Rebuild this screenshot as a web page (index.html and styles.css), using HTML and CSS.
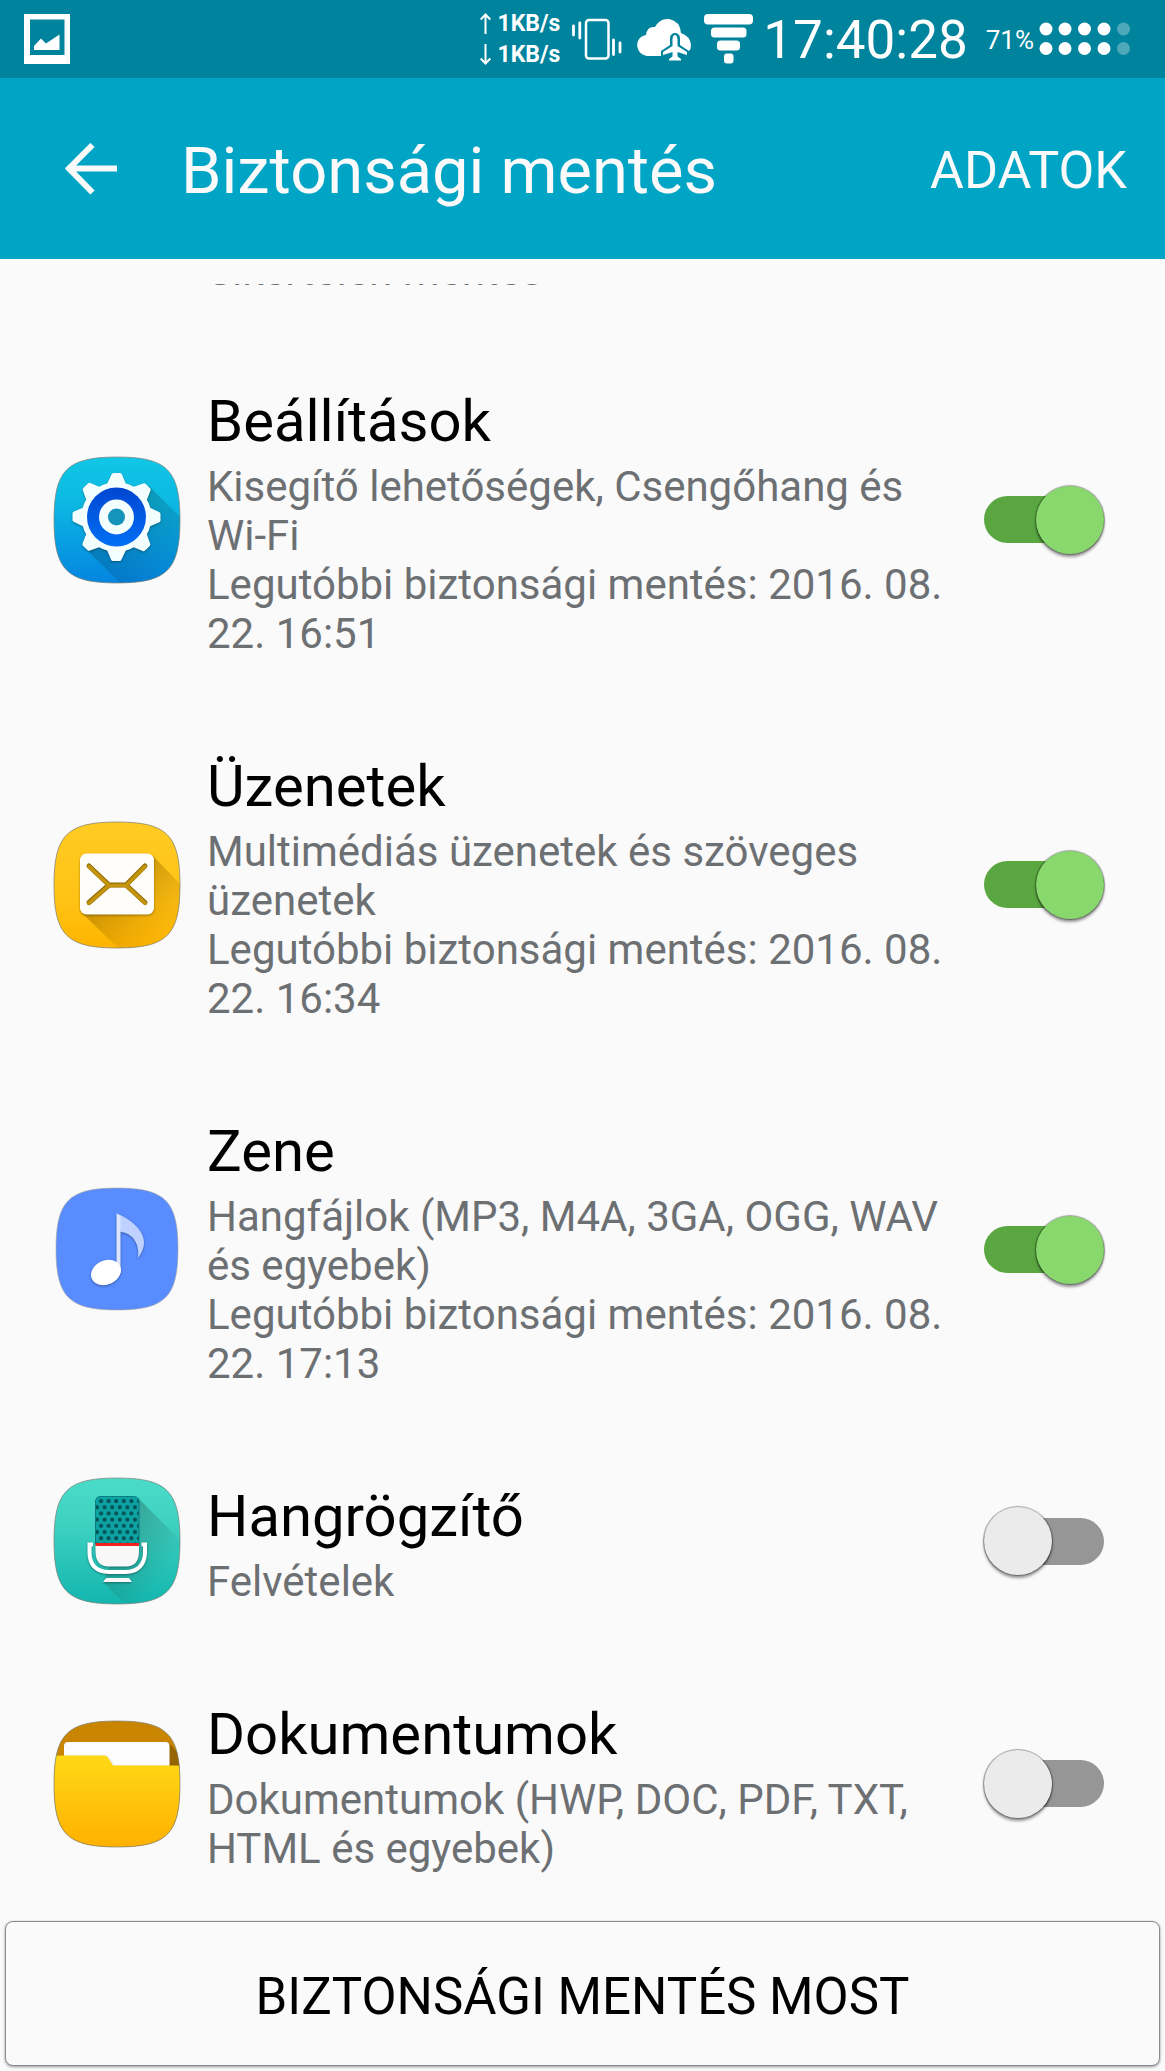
FILE: index.html
```html
<!DOCTYPE html>
<html lang="hu">
<head>
    <meta charset="UTF-8">
    <meta name="viewport" content="width=device-width, initial-scale=1.0">
    <title>Biztonsági mentés</title>
    <link rel="stylesheet" href="styles.css">
</head>
<body>
    <div class="status-bar">
        <svg class="photo-icon" width="46" height="50" viewBox="0 0 46 50">
            <path fill="#fff" fill-rule="evenodd" d="M0 0H46V50H0ZM6 5.500V41H40.500V5.500Z"/>
            <path fill="#fff" d="M10 32L17 24.500L22 29.500L35.500 20.500V36H10Z"/>
        </svg>
        <div class="speed">
            <p>
                <svg width="11" height="21" viewBox="0 0 11 21"><path d="M5.500 21V1.500M.7 6.500L5.500 1.500L10.300 6.500" fill="none" stroke="#fff" stroke-width="2"/></svg>
                <span>1KB/s</span>
            </p>
            <p>
                <svg width="11" height="21" viewBox="0 0 11 21"><path d="M5.500 0V19.500M.7 14.500L5.500 19.500L10.300 14.500" fill="none" stroke="#fff" stroke-width="2"/></svg>
                <span>1KB/s</span>
            </p>
        </div>
        <svg class="vibrate-icon" width="50" height="42" viewBox="0 0 50 42" fill="none" stroke="#fff">
            <rect x="14" y="2" width="22.500" height="38.500" rx="3" stroke-width="2.500"/>
            <path d="M1.500 8V17M7.800 5V20M41.500 22V36.500M48 25V34" stroke-width="2.800" stroke-linecap="round"/>
        </svg>
        <svg class="cloud-icon" width="56" height="43" viewBox="0 0 56 43">
            <path fill="#fff" d="M11 38A11 11 0 0 1 2 23Q4 18 10 17Q11 8 19 9Q24 0 33 1Q44 3 45 15Q54 18 55 27Q55 31 53 33L44 27V20A5 5 0 0 0 34 20V27L25 33V38Z"/>
            <path fill="#fff" d="M39 17C37 17 36.500 20 36.500 22V28L27 34V37L36.500 34V38.500L33 41V42.500H45V41L41.500 38.500V34L51 37V34L41.500 28V22C41.500 20 41 17 39 17Z"/>
        </svg>
        <svg class="signal-icon" width="49" height="50" viewBox="0 0 49 50" fill="#fff">
            <rect width="49" height="10.500" rx="4"/>
            <rect x="7" y="13.500" width="35.500" height="10" rx="3.500"/>
            <rect x="13" y="26.500" width="23" height="10" rx="3.500"/>
            <rect x="20" y="39.500" width="9.500" height="10" rx="3"/>
        </svg>
        <span class="clock">17:40:28</span>
        <span class="percent">71%</span>
        <svg width="92" height="34" viewBox="0 0 92 34" fill="#fff">
            <circle cx="7" cy="7" r="6.500"/><circle cx="26" cy="7" r="6.500"/><circle cx="45.500" cy="7" r="6.500"/><circle cx="65" cy="7" r="6.500"/>
            <circle cx="7" cy="26.500" r="6.500"/><circle cx="26" cy="26.500" r="6.500"/><circle cx="45.500" cy="26.500" r="6.500"/><circle cx="65" cy="26.500" r="6.500"/>
            <g opacity=".3"><circle cx="84.500" cy="7" r="6.500"/><circle cx="84.500" cy="26.500" r="6.500"/></g>
        </svg>
    </div>

    <header class="app-bar">
        <button class="back" type="button" aria-label="Vissza">
            <svg width="52" height="52" viewBox="0 0 52 52"><path d="M52 25.500H5M27.500 2L4 25.500L27.500 49.500" fill="none" stroke="#fafafa" stroke-width="6"/></svg>
        </button>
        <h1>Biztonsági mentés</h1>
        <button class="data" type="button">ADATOK</button>
    </header>

    <main>
        <!-- tail of the row that is scrolled out -->
        <div class="scrolled">
            <p>Sikertelen mentés</p>
        </div>

        <div class="row">
            <svg class="icon" width="128" height="128" viewBox="0 0 128 128">
                <defs>
                    <linearGradient id="blue" x2="0" y2="1"><stop stop-color="#11c7e6"/><stop offset=".35" stop-color="#0cb9e2"/><stop offset="1" stop-color="#0484e0"/></linearGradient>
                    <linearGradient id="ring" x2="0" y2="1"><stop stop-color="#0046d2"/><stop offset="1" stop-color="#0070f4"/></linearGradient>
                    <linearGradient id="shade" x2="1" y2="1"><stop offset=".3" stop-opacity=".2"/><stop offset="1" stop-opacity="0"/></linearGradient>
                    <clipPath id="tile"><path d="M64 1C114 1 127 14 127 64S114 127 64 127 1 114 1 64 14 1 64 1Z"/></clipPath>
                    <path id="tooth" d="M54 28L58.500 18.500Q59 17 60.500 17H67Q68.500 17 69 18.500L73 28Z"/>
                </defs>
                <g clip-path="url(#tile)">
                    <rect width="128" height="128" fill="url(#blue)"/>
                    <path d="M96 30L128 62V128H68L32 92Z" fill="url(#shade)"/>
                </g>
                <g class="raised" fill="#f3feff">
                    <circle cx="63.500" cy="61" r="35"/>
                    <use href="#tooth"/>
                    <use href="#tooth" transform="rotate(45 63.500 61)"/>
                    <use href="#tooth" transform="rotate(90 63.500 61)"/>
                    <use href="#tooth" transform="rotate(135 63.500 61)"/>
                    <use href="#tooth" transform="rotate(180 63.500 61)"/>
                    <use href="#tooth" transform="rotate(225 63.500 61)"/>
                    <use href="#tooth" transform="rotate(270 63.500 61)"/>
                    <use href="#tooth" transform="rotate(315 63.500 61)"/>
                </g>
                <circle cx="63.500" cy="61" r="29.500" fill="url(#ring)"/>
                <circle cx="63.500" cy="61" r="13" fill="#1593bb" stroke="#f3feff" stroke-width="9"/>
                <path class="edge" d="M64 1C114 1 127 14 127 64S114 127 64 127 1 114 1 64 14 1 64 1Z"/>
            </svg>
            <div class="text">
                <label for="settings">Beállítások</label>
                <p>Kisegítő lehetőségek, Csengőhang és Wi-Fi</p>
                <p>Legutóbbi biztonsági mentés: 2016. 08. 22. 16:51</p>
            </div>
            <input class="switch" type="checkbox" id="settings" checked>
        </div>

        <div class="row">
            <svg class="icon" width="128" height="128" viewBox="0 0 128 128">
                <defs>
                    <linearGradient id="amber" x2="0" y2="1"><stop stop-color="#ffcb24"/><stop offset=".6" stop-color="#ffc315"/><stop offset="1" stop-color="#ffb400"/></linearGradient>
                    <linearGradient id="amber-shade" x2="1" y2="1"><stop offset=".3" stop-color="#b07d00" stop-opacity=".75"/><stop offset=".9" stop-color="#d89500" stop-opacity="0"/></linearGradient>
                </defs>
                <g clip-path="url(#tile)">
                    <rect width="128" height="128" fill="url(#amber)"/>
                    <path d="M99 34L128 64V128H66L29 92Z" fill="url(#amber-shade)"/>
                </g>
                <rect class="raised" x="27" y="32.500" width="74" height="61" rx="6.500" fill="#fffefa"/>
                <path d="M36 45L56 64L36 81.500M92 45L73 64L92 81.500M56 64H73" fill="none" stroke="#8f6c08" stroke-width="5" stroke-linecap="round" stroke-linejoin="round"/>
                <path d="M36 45.500L56 64.500L36 82M92 45.500L73 64.500L92 82M56 64.500H73" fill="none" stroke="#c4950c" stroke-width="3.500" stroke-linecap="round" stroke-linejoin="round"/>
                <path class="edge" d="M64 1C114 1 127 14 127 64S114 127 64 127 1 114 1 64 14 1 64 1Z"/>
            </svg>
            <div class="text">
                <label for="messages">Üzenetek</label>
                <p>Multimédiás üzenetek és szöveges üzenetek</p>
                <p>Legutóbbi biztonsági mentés: 2016. 08. 22. 16:34</p>
            </div>
            <input class="switch" type="checkbox" id="messages" checked>
        </div>

        <div class="row">
            <svg class="icon" width="128" height="128" viewBox="0 0 128 128">
                <path d="M64 2C112 2 125 15 125 63S112 124 64 124 3 111 3 63 16 2 64 2Z" fill="#588cff" stroke="#a9a69a" stroke-width=".6"/>
                <g class="raised">
                    <path d="M63.500 27.500C78 33 91 45 91 56C91 63 88 68 85 72C87 58 80 47 67.500 46Z" fill="#bfd2ff"/>
                    <path d="M63.500 27.500L67.500 30V87H63.500Z" fill="#dce7ff"/>
                    <ellipse cx="53" cy="86.500" rx="15.500" ry="12" transform="rotate(-24 53 86.500)" fill="#fff"/>
                </g>
            </svg>
            <div class="text">
                <label for="music">Zene</label>
                <p>Hangfájlok (MP3, M4A, 3GA, OGG, WAV és egyebek)</p>
                <p>Legutóbbi biztonsági mentés: 2016. 08. 22. 17:13</p>
            </div>
            <input class="switch" type="checkbox" id="music" checked>
        </div>

        <div class="row">
            <svg class="icon" width="128" height="128" viewBox="0 0 128 128">
                <defs>
                    <linearGradient id="teal" x2="0" y2="1"><stop stop-color="#4bdcc8"/><stop offset=".35" stop-color="#3fd2c2"/><stop offset="1" stop-color="#12b5ad"/></linearGradient>
                    <linearGradient id="teal-shade" x2="1" y2="1"><stop offset=".2" stop-color="#25756c" stop-opacity=".55"/><stop offset=".75" stop-color="#25756c" stop-opacity="0"/></linearGradient>
                    <pattern id="holes" x="44" y="21" width="7.600" height="12.400" patternUnits="userSpaceOnUse">
                        <circle cx="4" cy="3" r="2.100"/><circle cx="0" cy="9.200" r="2.100"/><circle cx="7.600" cy="9.200" r="2.100"/>
                    </pattern>
                </defs>
                <g clip-path="url(#tile)">
                    <rect width="128" height="128" fill="url(#teal)"/>
                    <path d="M85 21L128 64V128H73L50 105Z" fill="url(#teal-shade)"/>
                </g>
                <path d="M42.500 67V25Q42.500 19.500 48 19.500H80.500Q86 19.500 86 25V67Z" fill="#0da3a5" stroke="#087c80"/>
                <path d="M43 66V25Q43 20 48 20H80.500Q85.500 20 85.500 25V66Z" fill="url(#holes)" opacity=".5"/>
                <g class="raised">
                    <path d="M42.500 69H86V74Q86 89.500 73 89.500H55.500Q42.500 89.500 42.500 74Z" fill="#f8f8f8"/>
                    <path d="M40 67.500H36.500V76Q37 94.500 56 95H72.500Q91 94.500 92 76V67.500H88.500" fill="none" stroke="#fff" stroke-width="4"/>
                    <path d="M50 105L53 101H76L79 105Z" fill="#f8f8f8"/>
                </g>
                <rect x="42.500" y="66" width="43.500" height="3" fill="#f0231f"/>
                <path class="edge" d="M64 1C114 1 127 14 127 64S114 127 64 127 1 114 1 64 14 1 64 1Z"/>
            </svg>
            <div class="text">
                <label for="recorder">Hangrögzítő</label>
                <p>Felvételek</p>
            </div>
            <input class="switch" type="checkbox" id="recorder">
        </div>

        <div class="row">
            <svg class="icon" width="128" height="128" viewBox="0 0 128 128">
                <defs>
                    <linearGradient id="folder" x2="0" y2="1"><stop stop-color="#ffd916"/><stop offset="1" stop-color="#ffb000"/></linearGradient>
                </defs>
                <g clip-path="url(#tile)">
                    <rect width="128" height="128" fill="#c98500"/>
                    <path d="M115 22L128 36V48H115Z" fill="#956600"/>
                    <path d="M11 48V26Q11 22 15 22H112.500Q116.500 22 116.500 26V48Z" fill="#fcfcfc"/>
                    <path class="raised" d="M0 35.500H51Q54 35.500 55.500 38.500L60 45.500H128V128H0Z" fill="url(#folder)"/>
                </g>
                <path class="edge" d="M64 1C114 1 127 14 127 64S114 127 64 127 1 114 1 64 14 1 64 1Z"/>
            </svg>
            <div class="text">
                <label for="documents">Dokumentumok</label>
                <p>Dokumentumok (HWP, DOC, PDF, TXT, HTML és egyebek)</p>
            </div>
            <input class="switch" type="checkbox" id="documents">
        </div>
    </main>

    <button class="backup-now" type="button">BIZTONSÁGI MENTÉS MOST</button>
</body>
</html>
```

FILE: styles.css
```css
* {
    box-sizing: border-box;
}

body {
    font-family: Roboto, sans-serif;
    margin: 0;
    min-height: 100vh;
    display: flex;
    flex-direction: column;
    background-color: #fafafa;
    color: #000;
}

h1, p {
    margin: 0;
}

button {
    font-family: inherit;
    font-size: 52px;
    border: none;
    padding: 0;
    background: none;
    cursor: pointer;
}

svg {
    display: block;
    flex-shrink: 0;
}

/* Status bar */
.status-bar {
    display: flex;
    align-items: center;
    height: 78px;
    padding: 0 34px 0 24px;
    background-color: #00839d;
    color: #fff;
}

.photo-icon {
    margin-right: auto;
}

.speed {
    font-size: 23px;
    font-weight: 700;
    line-height: 31px;
    margin-right: 12px;
}

.speed p {
    display: flex;
    align-items: center;
    gap: 6px;
}

.vibrate-icon {
    margin-right: 14px;
}

.cloud-icon {
    margin-right: 12px;
}

.signal-icon {
    margin-right: 10px;
}

.clock {
    font-size: 53px;
    padding-top: 2px;
    margin-right: 18px;
}

.percent {
    font-size: 26px;
    padding-top: 2px;
    margin-right: 5px;
}

/* App bar */
.app-bar {
    display: flex;
    align-items: center;
    height: 181px;
    padding: 0 38px 0 65px;
    background-color: #00a4c5;
    color: #fafafa;
}

.app-bar h1 {
    flex: 1;
    font-size: 65px;
    font-weight: 400;
    padding: 5px 0 0 64px;
}

.app-bar .data {
    color: #fafafa;
    padding-top: 4px;
}

/* List */
main {
    flex: 1;
    padding-top: 25px;
}

.scrolled {
    display: flex;
    align-items: flex-end;
    height: 53px;
    padding: 0 0 42px 207px;
    overflow: hidden;
}

.row {
    display: flex;
    align-items: center;
    padding: 0 61px 0 53px;
}

.text {
    flex: 1;
    padding: 50px 30px 44px 26px;
}

.text label {
    display: block;
    font-size: 58px;
    line-height: 68px;
    margin-bottom: 7px;
}

.text p, .scrolled p {
    font-size: 42px;
    line-height: 49px;
    color: #6d7073;
}

.edge {
    fill: none;
    stroke: #7d8078;
    stroke-opacity: .7;
}

.raised {
    filter: drop-shadow(0 1px 1px rgba(0, 0, 0, .35));
}

.switch {
    appearance: none;
    display: flex;
    align-items: center;
    flex-shrink: 0;
    width: 120px;
    height: 47px;
    margin: 0;
    border-radius: 24px;
    background-color: #969696;
    cursor: pointer;
}

.switch::before {
    content: "";
    flex-shrink: 0;
    width: 68px;
    height: 68px;
    border-radius: 50%;
    background-color: #ebebeb;
    box-shadow: 0 0 1px 1px rgba(0, 0, 0, .35), 0 3px 3px rgba(0, 0, 0, .4);
}

.switch:checked {
    justify-content: flex-end;
    background-color: #5aa741;
}

.switch:checked::before {
    background-color: #88d86d;
}

/* Bottom button */
.backup-now {
    height: 145px;
    margin: 3px 5px 5px;
    padding-top: 5px;
    font-size: 51px;
    border: 1px solid #8c8c8c;
    border-radius: 8px;
    color: #000;
    box-shadow: 0 1px 3px rgba(0, 0, 0, .4);
    background-color: #fafafa;
}
```
